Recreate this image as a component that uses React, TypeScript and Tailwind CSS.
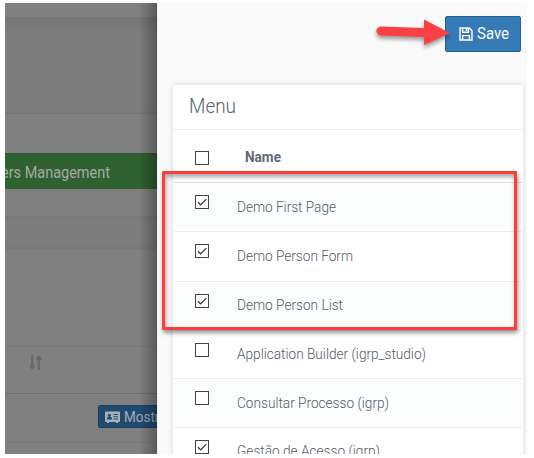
import React from "react";

const rows = [
  { name: "Demo First Page", checked: true, height: "h-[49px]", box: "top-[12px]", label: "top-[14px]", width: 99 },
  { name: "Demo Person Form", checked: true, height: "h-[50px]", box: "top-[12px]", label: "top-[14px]", width: 116 },
  { name: "Demo Person List", checked: true, height: "h-[49px]", box: "top-[12px]", label: "top-[13px]", width: 106 },
  { name: "Application Builder (igrp_studio)", checked: false, height: "h-[48px]", box: "top-[12px]", label: "top-[13px]", width: 189 },
  { name: "Consultar Processo (igrp)", checked: false, height: "h-[49px]", box: "top-[12px]", label: "top-[14px]", width: 152 },
  { name: "Gestão de Acesso (igrp)", checked: true, height: "h-[49px]", box: "top-[12px]", label: "top-[13px]", width: 143 },
];

function Label({ text, width, className }: { text: string; width: number; className: string }) {
  return (
    <svg width={width + 4} height="20" className={`block shrink-0 overflow-visible ${className}`}>
      <text x="0" y="15" textLength={width} lengthAdjust="spacingAndGlyphs" fill="currentColor">{text}</text>
    </svg>
  );
}

function Check({ checked }: { checked: boolean }) {
  return (
    <span className="flex h-[14px] w-[14px] border border-[#444] bg-white">
      {checked && (
        <svg viewBox="0 0 12 12" className="h-3 w-3" fill="none" stroke="#333" strokeWidth="1.3">
          <path d="M2 6.2 4.6 8.9 10.3 3.1" />
        </svg>
      )}
    </span>
  );
}

function SaveIcon() {
  return (
    <svg viewBox="0 0 14 14" className="h-[14px] w-[14px] shrink-0" fill="none" stroke="white" strokeWidth="1.4">
      <path d="M1 1h9.2L13 3.8V13H1zM3.6 13V8.6h6.8V13M3.6 1v4.2h5.8V1" />
      <path d="M7.6 1.3v2.8" strokeWidth="1.8" />
    </svg>
  );
}

function Backdrop() {
  return (
    <div className="relative h-[451px] w-[152px] shrink-0 overflow-hidden bg-[#808080]">
      <div className="h-[14px]" />
      <div className="h-[97px] border-t border-b border-t-[#767676] border-b-[#757575] bg-[linear-gradient(#777,#7d7d7d_17px,#7d7d7d_92px,#797979)]" />
      <div className="h-[39px]" />
      <div className="h-[36px] overflow-hidden border-t border-[#28552a] bg-[#2f6030] pt-[9px] text-[16px] text-[#a7aaa7]">
        <Label text="ers Management" width={109} className="-ml-[4px]" />
      </div>
      <div className="h-[27px]" />
      <div className="h-[34px] border-t border-b border-t-[#777] border-b-[#7b7b7b] bg-[linear-gradient(#7a7a7a,#7d7d7d_6px,#7d7d7d_25px,#797979)]" />
      <div className="flex h-[97px] flex-col justify-end border-b border-[#797979]" />
      <div className="flex h-[47px] border-b border-[#6f6f6f] pt-[8px] pl-[24px]">
        <svg width="13" height="15" viewBox="0 0 13 15" fill="none" stroke="#696969" strokeWidth="2.2">
          <path d="M3.2 0v13M.8 10.5l2.4 2.7 2.4-2.7M9.8 15V2M7.4 4.5l2.4-2.7 2.4 2.7" />
        </svg>
      </div>
      <div className="h-[49px] border-b border-[#797979] pt-[11px] pl-[93px]">
        <div className="flex h-[23px] w-[90px] items-center rounded-[2px] border border-[#194061] bg-[#204a70] pl-[6px] text-[14px] text-[#a8b0b7]">
          <svg width="15" height="12" viewBox="0 0 15 12" className="shrink-0">
            <path d="M1 .5h13q1 0 1 1V10q0 1-1 1h-1v1h-2v-1H4v1H2v-1H1q-1 0-1-1V1.500q0-1 1-1z" fill="#a8b0b7" />
            <g fill="#204a70">
              <circle cx="4.400" cy="4.200" r="1.500" />
              <path d="M2 8.500V7q.4-1.200 1.200-1.200h2.400Q6.500 5.900 6.800 7v1.500zM8.500 3H13v1H8.500zM8.500 5.200H13v1H8.500zM8.500 7.400H13v1H8.500z" />
            </g>
          </svg>
          <Label text="Mostrar" width={47} className="ml-[4px]" />
        </div>
      </div>
      <div className="h-[12px]" />
      <div className="ml-[93px] h-[20px] rounded-[2px] bg-[#204a70]" />
      <div className="absolute inset-y-0 right-0 w-[18px] bg-gradient-to-r from-transparent to-black/30" />
    </div>
  );
}

function Drawer() {
  return (
    <div className="h-[451px] w-[370px] shrink-0 overflow-hidden border-l border-[#eee] bg-[#fafafa]">
      <div className="flex h-[82px] items-start justify-end pt-[13px] pr-[6px]">
        <button className="flex h-[36px] w-[76px] items-center justify-center rounded-[2px] border border-[#286090] bg-[#337ab7] text-[16px] text-white">
          <SaveIcon />
          <Label text="Save" width={32} className="ml-[4px] -mr-[5px]" />
        </button>
      </div>
      <div className="ml-[15px] h-[372px] w-[350px] bg-white text-[#606876] shadow-[0_0_6px_rgba(0,0,0,0.14)]">
        <div className="flex h-[45px] items-center border-b border-[#eee] pl-[16px] text-[20px] font-light text-[#596270]">
          <Label text="Menu" width={47} className="mt-[2px]" />
        </div>
        <div className="mx-px flex h-[53px] items-start border-b border-[#ddd] pt-[21px] pl-[21px]">
          <Check checked={false} />
          <div className="-mt-[5px] ml-[36px] text-[14px] font-bold">
            <Label text="Name" width={36} className="mt-px" />
          </div>
        </div>
        {rows.map((row, index) => (
          <div key={row.name} className={`mx-px flex items-start border-b border-[#eceeee] pl-[21px] ${row.height} ${index % 2 ? "bg-white" : "bg-[#fafdfc]"}`}>
            <div className={`relative ${row.box}`}><Check checked={row.checked} /></div>
            <div className={`relative ml-[28px] text-[14.5px] font-light text-[#535b68] ${row.label}`}>
              <Label text={row.name} width={row.width} className="" />
            </div>
          </div>
        ))}
      </div>
    </div>
  );
}

export default function App() {
  return (
    <main className="relative h-[458px] w-[534px] overflow-hidden bg-white pt-[3px] pl-[5px] [font-family:Roboto,sans-serif]">
      <div className="flex h-[451px] w-[522px] overflow-hidden">
        <Backdrop />
        <Drawer />
      </div>
      <div className="absolute top-[171px] left-[162px] h-[159px] w-[355px] rounded-[1px] border-[3px] border-[#fc3d40] shadow-[1px_3px_4px_rgba(0,0,0,0.4),inset_1px_3px_4px_rgba(0,0,0,0.35)]" />
      <svg className="absolute top-[14px] left-[370px] drop-shadow-[0_3px_2px_rgba(0,0,0,0.4)]" width="86" height="38" viewBox="0 0 86 38">
        <path d="M10.500 12.500 54 14V5.500L80 19 54 31v-8L10.500 21.500C5 20.500 5 13.500 10.500 12.500z" fill="#fb4043" />
      </svg>
    </main>
  );
}
